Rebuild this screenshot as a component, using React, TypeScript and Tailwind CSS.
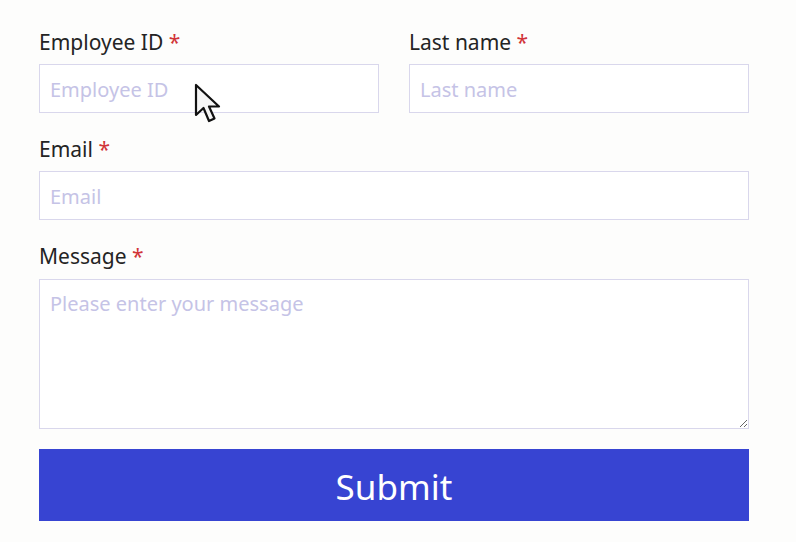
import React from 'react';

function Label({ text }: { text: string }) {
  return (
    <span className="h-[28px] text-[21px] leading-[32px] text-[#242424]">
      {text} <span className="text-[#d13438]">*</span>
    </span>
  );
}

function Field({ label, placeholder }: { label: string; placeholder: string }) {
  return (
    <label className="flex flex-col">
      <Label text={label} />
      <input
        placeholder={placeholder}
        className="mt-[10px] h-[49px] w-full border border-[#d9d7ec] bg-white px-[10px] pt-[2px] text-[20px] text-[#242424] outline-none placeholder:text-[#c5c3e6]"
      />
    </label>
  );
}

function Cursor() {
  return (
    <svg
      className="pointer-events-none absolute left-[194px] top-[83px]"
      width="29"
      height="42"
      viewBox="0 0 29 42"
    >
      <path
        d="M2 2 L2 32 L9.5 25 L15 38 L20.5 35.5 L15 23.5 L25 23.5 Z"
        fill="#f5f5f5"
        stroke="#111"
        strokeWidth="2.2"
        strokeLinejoin="round"
      />
    </svg>
  );
}

export default function App() {
  return (
    <div className="relative min-h-[542px] w-[796px] bg-[#fdfdfc] font-['Noto_Sans',sans-serif]">
      <form
        className="flex w-[710px] ml-[39px] flex-col gap-[20px] pt-[26px]"
        onSubmit={(e) => e.preventDefault()}
      >
        <div className="grid grid-cols-2 gap-x-[30px]">
          <Field label="Employee ID" placeholder="Employee ID" />
          <Field label="Last name" placeholder="Last name" />
        </div>
        <Field label="Email" placeholder="Email" />
        <label className="flex flex-col">
          <Label text="Message" />
          <textarea
            placeholder="Please enter your message"
            className="mt-[11px] h-[150px] w-full border border-[#d9d7ec] bg-white px-[10px] py-[9px] text-[20px] text-[#242424] outline-none placeholder:text-[#c5c3e6]"
          />
        </label>
        <button className="h-[72px] w-full bg-[#3744d2] pt-[5px] text-[35px] text-white">Submit</button>
      </form>
      <Cursor />
    </div>
  );
}
